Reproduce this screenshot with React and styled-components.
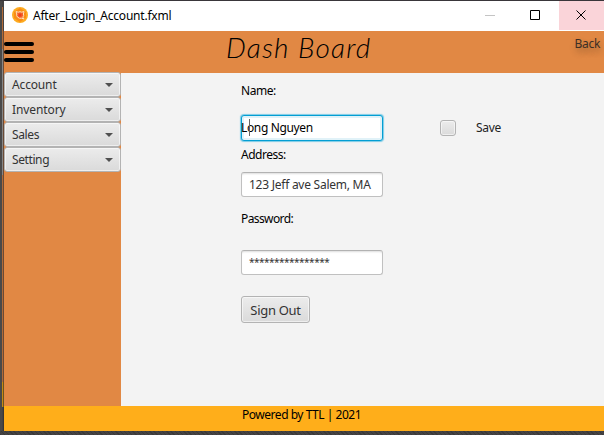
import React from "react";
import styled, { createGlobalStyle } from "styled-components";

const Global = createGlobalStyle`
  * { box-sizing: border-box; }
  body { margin: 0; background: #403e3e; overflow: hidden; }
`;

const Desktop = styled.div`
  display: flex;
  width: 604px;
  height: 435px;
  padding-top: 1px;
  background: repeating-linear-gradient(45deg, #3b3a3a 0 1px, #454343 1px 3px);
  box-shadow: inset 0 1px 0 #39363a;
  font-family: "Noto Sans", "Open Sans", sans-serif;
  font-size: 12px;
  color: #000;
`;

const EdgeStrip = styled.div`
  width: 4px;
  height: 430px;
  flex: none;
  background:
    linear-gradient(#454343 0 30px, #6b4a35 30px 381px, #6b5420 381px 406px, #383636 406px) 3px 0 / 1px 100% no-repeat,
    linear-gradient(#454343 0 6px, #b06a38 6px 48px, #858585 48px 174px, #b06a38 174px 381px, #c68a12 381px 406px, #454343 406px)
      2px 0 / 1px 100% no-repeat,
    #4a4949;
`;

const Window = styled.div`
  display: flex;
  flex-direction: column;
  width: 600px;
  height: 430px;
`;

const Text = styled.span`
  display: block;
  white-space: pre;
  line-height: 16px;
  letter-spacing: ${(p) => p.$track || 0}px;
`;

const TitleBar = styled.div`
  display: flex;
  align-items: flex-start;
  height: 30px;
  background: #fff;
`;

const AppIcon = styled.svg`
  margin: 6px 5px 0 8px;
  flex: none;
`;

const WindowTitle = styled(Text)`
  margin-top: 7px;
  flex: 1;
`;

const WindowButton = styled.div`
  width: ${(p) => p.$width}px;
  height: 29px;
  background: ${(p) => (p.$close ? "#fad4d9" : "transparent")};
  svg { display: block; }
`;

const Header = styled.div`
  display: flex;
  align-items: flex-start;
  height: 42px;
  background: #e18844;
`;

const Burger = styled.div`
  display: flex;
  flex-direction: column;
  gap: 4px;
  width: 30px;
  margin-top: 11px;
  i { height: 4px; border-radius: 2px; background: #000; }
`;

const Heading = styled.h1`
  margin: -2px 0 0 192px;
  width: 149px;
  font-family: "Ink Free", "Lato Light", "Lato", sans-serif;
  font-size: 28px;
  font-weight: 300;
  font-style: italic;
  line-height: 36px;
  letter-spacing: 1.2px;
  white-space: nowrap;
  flex: none;
`;

const Back = styled(Text)`
  margin: 5px 4px 0 auto;
  color: #3c2f25;
  text-shadow: 1px 4px 6px rgba(70, 50, 30, 0.45);
`;

const Body = styled.div`
  display: flex;
  height: 333px;
  background: #f3f3f3;
`;

const Sidebar = styled.div`
  width: 117px;
  margin-top: -1px;
  background: #e18844;
`;

const control = `
  border: 1px solid #b3b3b3;
  border-radius: 3px;
  background: linear-gradient(#ececec, #dadada);
  box-shadow: inset 0 0 0 1px rgba(255, 255, 255, 0.55);
`;

const MenuButton = styled.div`
  ${control}
  display: flex;
  justify-content: space-between;
  align-items: center;
  height: 25px;
  padding: 0 7px;
  color: #333;
`;

const Form = styled.div`
  display: flex;
  flex-direction: column;
  align-items: flex-start;
  width: 142px;
  margin-left: 120px;
  padding-top: 10px;
`;

const FieldLabel = styled(Text)`
  margin-top: ${(p) => p.$top}px;
`;

const Field = styled.div`
  position: relative;
  display: flex;
  align-items: center;
  width: 142px;
  height: ${(p) => (p.$focus ? 26 : 25)}px;
  margin-top: ${(p) => p.$top}px;
  padding-left: ${(p) => (p.$focus ? 0 : 7)}px;
  border: ${(p) => (p.$focus ? "1px solid #039ed3" : "1px solid #c0c0c0")};
  border-top-color: ${(p) => (p.$focus ? "#039ed3" : "#b2b2b2")};
  border-radius: 3px;
  background: #fff;
  color: ${(p) => (p.$focus ? "#000" : "#333")};
  box-shadow: ${(p) =>
    p.$focus
      ? "0 0 1px 1px #7ccbe6, inset 0 0 0 2px #e1f2f8"
      : "inset 0 2px 2px -1px #ddd"};
`;

const NameValue = styled(Text)`
  margin-left: -1px;
`;

const Mask = styled(Text)`
  padding-bottom: 2px;
  font-size: 10px;
`;

/* Insertion caret, drawn over the value */
const Caret = styled.span`
  position: absolute;
  left: 7px;
  top: 3px;
  width: 1px;
  height: 17px;
  background: #666;
`;

const SignOut = styled.div`
  ${control}
  display: flex;
  align-items: center;
  justify-content: center;
  width: 69px;
  height: 27px;
  margin-top: 21px;
  font-size: 13px;
  color: #333;
`;

const SaveOption = styled.div`
  display: flex;
  align-items: center;
  gap: 20px;
  height: 16px;
  margin: 47px 0 0 57px;
  color: #222;
`;

const Checkbox = styled.div`
  ${control}
  width: 16px;
  height: 16px;
`;

const Footer = styled.div`
  height: 25px;
  padding: 1px 0 0 238px;
  background: #ffae1a;
`;

const MENUS = [
  { name: "Account", track: -0.15 },
  { name: "Inventory", track: -0.1 },
  { name: "Sales", track: -0.35 },
  { name: "Setting", track: -0.4 },
];

export default function App() {
  return (
    <>
      <Global />
      <Desktop>
        <EdgeStrip />
        <Window>
          <TitleBar>
            <AppIcon width="16" height="16" viewBox="0 0 16 16">
              <circle cx="8" cy="8" r="8" fill="#fdab20" />
              <path d="M2 5 8 1l6 4v6l-6 4-6-4z" fill="#f98c16" />
              <path d="M4 4.6 6.4 5.2Q8 4.2 9.6 5.2L12 4.6 11.4 7Q12.2 8.6 10.8 10.2L12 12 9.6 11.2Q7.4 11.8 5.6 10.2 4.2 8.6 4.8 7z" fill="#f4622a" stroke="#ffe3bd" strokeWidth="1" />
              <circle cx="8" cy="8" r="1.5" fill="#f03c1c" />
            </AppIcon>
            <WindowTitle $track={-0.22}>After_Login_Account.fxml</WindowTitle>
            <WindowButton $width={45}>
              <svg width="45" height="29"><path d="M11 14.5h10" stroke="#c4c4c4" /></svg>
            </WindowButton>
            <WindowButton $width={40}>
              <svg width="40" height="29"><path d="M11.5 9.5h9v9h-9z" fill="none" stroke="#000" /></svg>
            </WindowButton>
            <WindowButton $width={45} $close>
              <svg width="45" height="29"><path d="m17.5 9.5 9 9m0-9-9 9" stroke="#000" /></svg>
            </WindowButton>
          </TitleBar>
          <Header>
            <Burger><i /><i /><i /></Burger>
            <Heading>Dash Board</Heading>
            <Back $track={-0.3}>Back</Back>
          </Header>
          <Body>
            <Sidebar>
              {MENUS.map((m) => (
                <MenuButton key={m.name}>
                  <Text $track={m.track}>{m.name}</Text>
                  <svg width="8" height="4"><path d="M0 0h8L4 4z" fill="#505050" /></svg>
                </MenuButton>
              ))}
            </Sidebar>
            <Form>
              <FieldLabel $top={0} $track={-0.45}>Name:</FieldLabel>
              <Field $focus $top={16}>
                <NameValue $track={-0.35}>Long Nguyen</NameValue>
                <Caret />
              </Field>
              <FieldLabel $top={6} $track={-0.5}>Address:</FieldLabel>
              <Field $top={9}><Text $track={-0.25}>123 Jeff ave Salem, MA</Text></Field>
              <FieldLabel $top={14} $track={-0.6}>Password:</FieldLabel>
              <Field $top={23}><Mask $track={-0.5}>****************</Mask></Field>
              <SignOut><Text $track={-0.3}>Sign Out</Text></SignOut>
            </Form>
            <SaveOption>
              <Checkbox />
              <Text $track={-0.3}>Save</Text>
            </SaveOption>
          </Body>
          <Footer><Text $track={-0.47}>Powered by TTL | 2021</Text></Footer>
        </Window>
      </Desktop>
    </>
  );
}
